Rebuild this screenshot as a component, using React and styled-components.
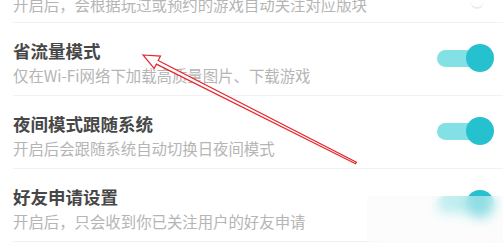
import React from 'react';
import styled, { createGlobalStyle } from "styled-components";

const GlobalStyle = createGlobalStyle`
    html, body {
        margin: 0;
        padding: 0;
        background: #ffffff;
        overflow: hidden;
    }
    body {
        font-family: "Noto Sans CJK SC", "Noto Sans", sans-serif;
    }
`

const settings = [
    { title: "省流量模式", desc: "仅在Wi-Fi网络下加载高质量图片、下载游戏", on: true },
    { title: "夜间模式跟随系统", desc: "开启后会跟随系统自动切换日夜间模式", on: true },
    { title: "好友申请设置", desc: "开启后，只会收到你已关注用户的好友申请", on: true, blurred: true },
]

const Toggle = ({ on }) => {
    return (
        <StyledToggle>
            <StyledTrack on={on ? 1 : 0} />
            <StyledKnob on={on ? 1 : 0} />
        </StyledToggle>
    )
}

const Row = ({ title, desc, on, blurred }) => {
    return (
        <StyledRow>
            <StyledText>
                <StyledTitle>{title}</StyledTitle>
                <StyledDesc>{desc}</StyledDesc>
            </StyledText>
            <Toggle on={on} />
            {blurred && <StyledSmudge />}
        </StyledRow>
    )
}

const Arrow = () => {
    return (
        <StyledArrow viewBox="0 0 503 245" width="503" height="245">
            <polygon
                points="143,55 160.5,56.1 158.2,60.5 356.4,162.3 355.6,163.7 156.4,64.1 154.1,68.5"
                fill="rgba(255,255,255,0.85)"
                stroke="#e5252c"
                strokeWidth="1.2"
                strokeLinejoin="miter"
            />
        </StyledArrow>
    )
}

const App = () => {
    return (
        <StyledPage>
            <GlobalStyle />
            <StyledTopRow>
                <StyledDesc>开启后，会根据玩过或预约的游戏自动关注对应版块</StyledDesc>
                <StyledGhost />
            </StyledTopRow>
            {settings.map((s) => (
                <Row key={s.title} {...s} />
            ))}
            <Arrow />
        </StyledPage>
    )
}

const StyledPage = styled.div`
    position: relative;
    width: 503px;
    height: 245px;
    overflow: hidden;
    background: #ffffff;
    filter: blur(0.35px);
`

const StyledTopRow = styled.div`
    display: flex;
    align-items: center;
    justify-content: space-between;
    margin: -6px 0 0 13px;
    padding: 0 9px 8px 0;
    border-bottom: 1px solid #f2f2f2;
`

const StyledGhost = styled.div`
    width: 14px;
    height: 14px;
    border-radius: 50%;
    border-bottom: 2px solid #ececec;
    margin-right: 10px;
    margin-top: -6px;
`

const StyledRow = styled.div`
    position: relative;
    display: flex;
    align-items: center;
    justify-content: space-between;
    height: 72px;
    margin-left: 13px;
    padding-right: 9px;
    border-bottom: 1px solid #f2f2f2;
`

const StyledText = styled.div`
    display: flex;
    flex-direction: column;
    padding-top: 6px;
`

const StyledTitle = styled.div`
    font-size: 17.5px;
    line-height: 22px;
    font-weight: 700;
    color: #474747;
    margin-bottom: 3px;
`

const StyledDesc = styled.div`
    font-size: 15.4px;
    line-height: 20px;
    color: #b5b5b5;
    white-space: nowrap;
`

const StyledToggle = styled.div`
    position: relative;
    width: 57px;
    height: 28px;
    display: flex;
    align-items: center;
    margin-top: -2px;
`

const StyledTrack = styled.div`
    width: 47px;
    height: 17px;
    border-radius: 9px;
    background: ${props => props.on ? "#83e0e4" : "#e6e6e6"};
`

const StyledKnob = styled.div`
    position: absolute;
    top: 0;
    left: ${props => props.on ? "29px" : "0"};
    width: 28px;
    height: 28px;
    border-radius: 50%;
    background: ${props => props.on ? "#25c1ce" : "#ffffff"};
`

const StyledSmudge = styled.div`
    position: absolute;
    left: 354px;
    right: -2px;
    top: 27px;
    bottom: -2px;
    background: rgba(250, 250, 250, 0.5);
    backdrop-filter: blur(6px);
`

const StyledArrow = styled.svg`
    position: absolute;
    top: 0;
    left: 0;
    pointer-events: none;
`

export default App;
